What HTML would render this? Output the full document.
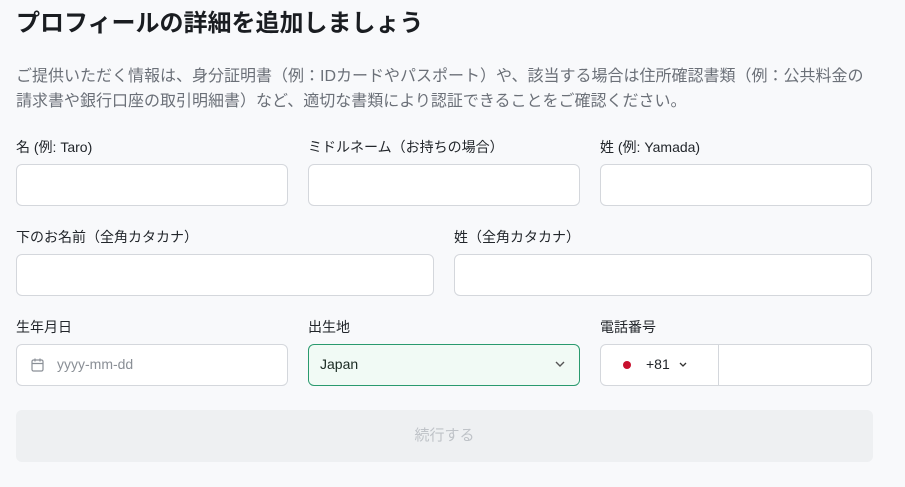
<!DOCTYPE html><html><head><meta charset="utf-8"><style>
body{margin:0;width:905px;height:487px;background:#f8f9fb;font-family:"Liberation Sans","Noto Sans CJK JP",sans-serif;position:relative;overflow:hidden;color:#1f2328}
.a{position:absolute;white-space:nowrap}
h1{position:absolute;left:16px;top:3px;margin:0;font-size:24px;font-weight:bold;color:#1a1d21}
.d{left:16px;font-size:16px;color:#6b7078;line-height:25px;top:64px}
.l{font-size:14px;color:#22262b}
.i{position:absolute;box-sizing:border-box;background:#fff;border:1px solid #d4d7dc;border-radius:6px;height:42px}
</style></head><body>
<h1>プロフィールの詳細を追加しましょう</h1>
<div class="a d">ご提供いただく情報は、身分証明書（例：IDカードやパスポート）や、該当する場合は住所確認書類（例：公共料金の<br>請求書や銀行口座の取引明細書）など、適切な書類により認証できることをご確認ください。</div>
<div class="a l" style="left:16px;top:137px">名 (例: Taro)</div>
<div class="a l" style="left:308px;top:137px">ミドルネーム（お持ちの場合）</div>
<div class="a l" style="left:600px;top:137px">姓 (例: Yamada)</div>
<div class="i" style="left:16px;top:164px;width:272px"></div>
<div class="i" style="left:308px;top:164px;width:272px"></div>
<div class="i" style="left:600px;top:164px;width:272px"></div>
<div class="a l" style="left:16px;top:227px">下のお名前（全角カタカナ）</div>
<div class="a l" style="left:454px;top:227px">姓（全角カタカナ）</div>
<div class="i" style="left:16px;top:254px;width:418px"></div>
<div class="i" style="left:454px;top:254px;width:418px"></div>
<div class="a l" style="left:16px;top:317px">生年月日</div>
<div class="a l" style="left:308px;top:317px">出生地</div>
<div class="a l" style="left:600px;top:317px">電話番号</div>
<div class="i" style="left:16px;top:344px;width:272px">
<svg style="position:absolute;left:14px;top:13px" width="13" height="14" viewBox="0 0 13 14" fill="none" stroke="#8a8f96" stroke-width="1.2"><rect x="1" y="2" width="11" height="11" rx="1.5"/><path d="M4 0.5v3M9 0.5v3M1 5.5h11"/></svg>
<span class="a" style="left:40px;top:11px;font-size:14px;color:#8a8f96">yyyy-mm-dd</span></div>
<div class="i" style="left:308px;top:344px;width:272px;background:#f1faf5;border-color:#2a9a6e">
<span class="a" style="left:11px;top:11px;font-size:14px;color:#1a2a22">Japan</span>
<svg style="position:absolute;right:14px;top:16px" width="10" height="7" viewBox="0 0 10 7" fill="none" stroke="#555" stroke-width="1.4"><path d="M1 1l4 4 4-4"/></svg></div>
<div class="i" style="left:600px;top:344px;width:272px">
<span class="a" style="left:22px;top:16px;width:8px;height:8px;border-radius:50%;background:#c8102e"></span>
<span class="a" style="left:45px;top:11px;font-size:14px;color:#1f2328">+81</span>
<svg style="position:absolute;left:78px;top:17px" width="8" height="6" viewBox="0 0 8 6" fill="none" stroke="#333" stroke-width="1.3"><path d="M1 1l3 3 3-3"/></svg>
<span class="a" style="left:117px;top:0;width:1px;height:40px;background:#d4d7dc"></span></div>
<div class="a" style="left:16px;top:410px;width:857px;height:52px;background:#eef0f2;border-radius:6px;text-align:center;line-height:52px;font-size:15px;color:#bfc3c8">続行する</div>
</body></html>
